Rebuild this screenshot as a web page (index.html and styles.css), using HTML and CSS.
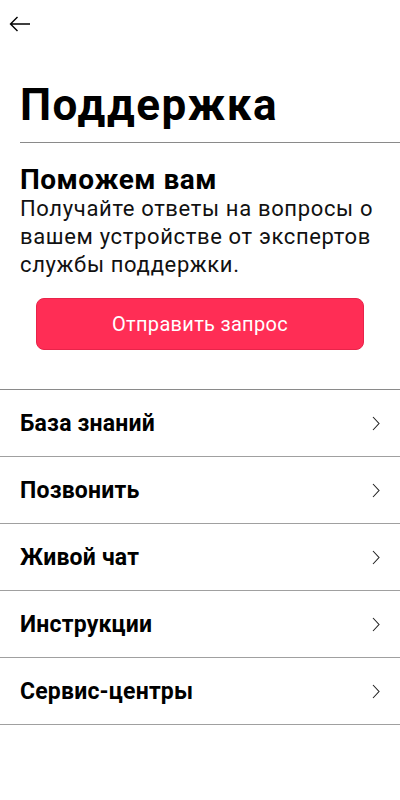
FILE: index.html
```
<!DOCTYPE html>
<html lang="ru">
<head>
<meta charset="utf-8">
<link rel="stylesheet" href="styles.css">
</head>
<body>
<div class="page">
  <header class="topbar">
    <svg class="back" width="22" height="16" viewBox="0 0 22 16"><path d="M21 8H1.5M8.5 1L1.5 8l7 7" fill="none" stroke="#000" stroke-width="1.4"/></svg>
  </header>
  <h1 class="title">Поддержка</h1>
  <div class="title-rule"></div>
  <section class="help">
    <h2 class="help-title">Поможем вам</h2>
    <p class="help-text">Получайте ответы на вопросы о вашем устройстве от экспертов службы поддержки.</p>
    <button class="btn">Отправить запрос</button>
  </section>
  <ul class="menu">
    <li class="item"><span>База знаний</span><svg class="chev" width="8" height="15" viewBox="0 0 8 15"><path d="M1 1l6 6.5L1 14" fill="none" stroke="#222" stroke-width="1.1"/></svg></li>
    <li class="item"><span>Позвонить</span><svg class="chev" width="8" height="15" viewBox="0 0 8 15"><path d="M1 1l6 6.5L1 14" fill="none" stroke="#222" stroke-width="1.1"/></svg></li>
    <li class="item"><span>Живой чат</span><svg class="chev" width="8" height="15" viewBox="0 0 8 15"><path d="M1 1l6 6.5L1 14" fill="none" stroke="#222" stroke-width="1.1"/></svg></li>
    <li class="item"><span>Инструкции</span><svg class="chev" width="8" height="15" viewBox="0 0 8 15"><path d="M1 1l6 6.5L1 14" fill="none" stroke="#222" stroke-width="1.1"/></svg></li>
    <li class="item"><span>Сервис-центры</span><svg class="chev" width="8" height="15" viewBox="0 0 8 15"><path d="M1 1l6 6.5L1 14" fill="none" stroke="#222" stroke-width="1.1"/></svg></li>
  </ul>
</div>
</body>
</html>
```
FILE: styles.css
```
* { box-sizing: border-box; }
html, body { margin: 0; padding: 0; background: #fff; }
body { font-family: Roboto, "Noto Sans", sans-serif; color: #000; }
.page { width: 400px; min-height: 800px; }
.topbar { height: 48px; padding: 16px 0 0 9px; }
.back { display: block; }
.title { margin: 31px 0 0 20px; font-size: 44px; font-weight: 700; line-height: 52px; letter-spacing: 1.5px; }
.title-rule { margin: 11px 0 0 20px; height: 1px; background: #8a8a8a; }
.help { padding: 22px 20px 0; }
.help-title { margin: 0; font-size: 28px; font-weight: 700; line-height: 30px; letter-spacing: 0.5px; }
.help-text { margin: 0; font-size: 22px; line-height: 28px; font-weight: 400; color: #111; letter-spacing: 0.65px; }
.btn { display: block; margin: 19px 16px 0; width: 328px; height: 52px; border: 1px solid #e8244a; border-radius: 8px; background: #ff2d55; color: #fff; font-family: Roboto, sans-serif; font-size: 20px; letter-spacing: 0.3px; }
.menu { list-style: none; margin: 39px 0 0; padding: 0; border-top: 1px solid #8a8a8a; }
.item { height: 67px; border-bottom: 1px solid #a0a0a0; display: flex; align-items: center; justify-content: space-between; padding: 0 20px; font-size: 23px; font-weight: 700; letter-spacing: 0.2px; }
.chev { display: block; margin-top: 1px; }
```
